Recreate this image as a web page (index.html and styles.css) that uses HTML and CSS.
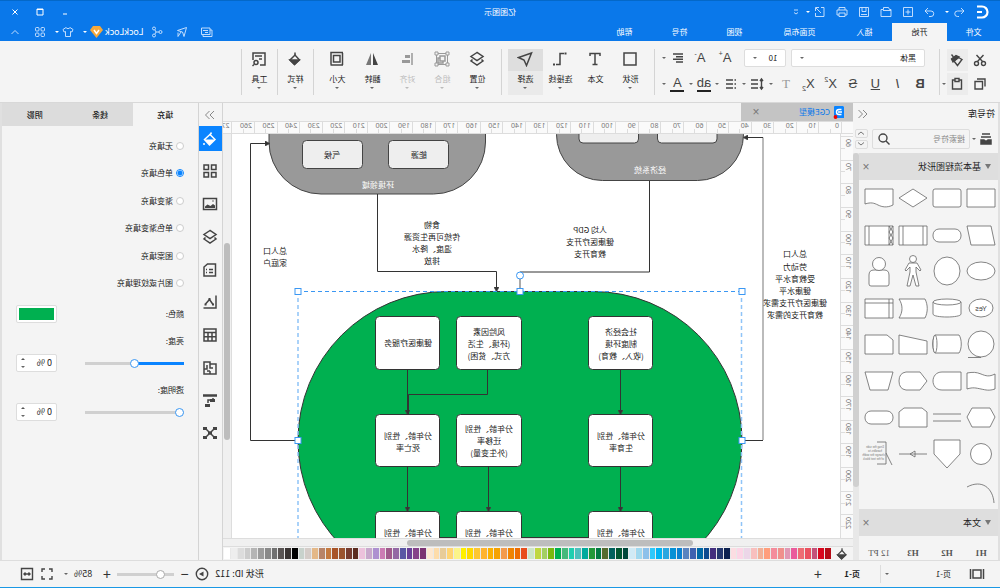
FILE: index.html
```html
<!DOCTYPE html>
<html lang="zh-CN">
<head>
<meta charset="utf-8">
<title>亿图图示</title>
<link rel="stylesheet" href="styles.css">
</head>
<body>
<div class="app">
<header class="header">
  <div class="titlebar">
    <div class="quick">
      <svg class="logo" viewBox="0 0 14 14"><path d="M12 1.500H7a5.500 5.500 0 0 0 0 11h5M7 7h5" fill="none" stroke="#fff" stroke-width="2.200"/></svg>
      <button aria-label="撤销"><svg class="q" viewBox="0 0 12 12"><path d="M4 2 1 5l3 3M1 5h6.500a2.500 2.500 0 0 1 0 5.500H6"/></svg></button><i class="car first"></i>
      <button aria-label="重做"><svg class="q" viewBox="0 0 12 12"><path d="M8 2l3 3-3 3M11 5H5a2.500 2.500 0 0 0 0 5.500h2"/></svg></button>
      <button aria-label="新建"><svg class="q" viewBox="0 0 12 12"><path d="M1.500 1.500h9v9h-9zM6 3.500v5M3.500 6h5"/></svg></button>
      <button aria-label="打开"><svg class="q" viewBox="0 0 12 12"><path d="M1 10.500v-7h1.500l1-2h5v2h2.500v7zM1 4.500h8"/></svg></button>
      <button aria-label="保存"><svg class="q" viewBox="0 0 12 12"><path d="M1.500 1.500h9v9h-9zM4 1.500v4h4v-4M3 8.500h6"/></svg></button>
      <button aria-label="打印"><svg class="q" viewBox="0 0 12 12"><path d="M3 4V1.500h6V4M3 9H1V4h10v5H9M3 7h6v3.500H3z"/></svg></button>
      <button aria-label="导出"><svg class="q" viewBox="0 0 12 12"><path d="M5 1.500H2v9h8.500V7M5 7l5-5M7 1.500h3.500V5"/></svg></button><i class="car"></i>
      <button aria-label="更多"><svg class="q" viewBox="0 0 12 12"><path d="M4 4h4M4 6.500l2 1.500 2-1.500"/></svg></button>
    </div>
    <h1 class="title">亿图图示</h1>
    <div class="winbtns">
      <button aria-label="最小化"><svg class="w" viewBox="0 0 8 8"><path d="M2 6h4"/></svg></button>
      <button aria-label="最大化"><svg class="w" viewBox="0 0 8 8"><path d="M1 1h6v6H1zM1 1.500h6"/></svg></button>
      <button aria-label="关闭"><svg class="w" viewBox="0 0 8 8"><path d="M1.500 1.500l5 5M6.500 1.500l-5 5"/></svg></button>
    </div>
  </div>
  <div class="menubar">
    <nav class="menus">
      <button>文件</button><button class="on">开始</button><button>插入</button><button class="wide">页面布局</button><button>视图</button><button>符号</button><button>帮助</button>
    </nav>
    <div class="account">
      <button aria-label="消息"><svg class="q" viewBox="0 0 12 12"><path d="M3 2h8.500v6.500H3zM3 4H1v6.500h9V9M5 4.500h5M5 6.500h3"/></svg></button>
      <button aria-label="发送"><svg class="q" viewBox="0 0 12 12"><path d="M1.500 1.500l9 3-5 1.500L4 10.500zM7 6l3 4.500V6.500"/></svg></button>
      <button aria-label="分享"><svg class="q" viewBox="0 0 12 12"><circle cx="2.500" cy="6" r="1.500"/><circle cx="9" cy="2.500" r="1.500"/><circle cx="9" cy="9.500" r="1.500"/><path d="M4 6h3l1-2M7 6l1 2"/></svg></button>
      <span class="user">LockLock</span>
      <svg class="gem" viewBox="0 0 13 12"><path d="M3 0h7l3 4-6.500 8L0 4z" fill="#f6a83a" stroke="none"/><path d="M4 4l2.500 3.500L9 4" fill="none" stroke="#fff" stroke-width="1.500"/></svg>
      <i class="car"></i>
      <button aria-label="皮肤"><svg class="q" viewBox="0 0 12 12"><path d="M4 1.500 1 3.500 2 6l1.500-.5v5h5v-5L10 6l1-2.500-3-2c-1 1.500-3 1.500-4 0z"/></svg></button><i class="car"></i>
      <button aria-label="应用"><svg class="q" viewBox="0 0 12 12"><rect x="1.500" y="1.500" width="3.500" height="3.500" rx="1"/><rect x="7" y="1.500" width="3.500" height="3.500" rx="1"/><rect x="1.500" y="7" width="3.500" height="3.500" rx="1"/><rect x="7" y="7" width="3.500" height="3.500" rx="1"/></svg></button>
      <button aria-label="收起"><svg class="q" viewBox="0 0 12 12"><path d="M2.500 8 6 4.500 9.500 8"/></svg></button>
    </div>
  </div>
</header>

<section class="ribbon">
  <div class="clip">
    <button aria-label="剪切"><svg class="t" viewBox="0 0 14 14"><circle cx="3.500" cy="10.500" r="2"/><circle cx="10.500" cy="10.500" r="2"/><path d="M4.500 8.500 10.500 2M9.500 8.500 3.500 2"/></svg></button>
    <button class="sh" aria-label="格式刷"><svg class="t" viewBox="0 0 14 14"><path d="M2 6.500 5.500 4.500 10 8l-3.500 4.500z"/><path d="M5 4l6 5 1.500-3L8 2.500z" fill="#444"/><path d="M10.500 4 12.500 1.500"/></svg></button><i></i>
    <button aria-label="复制"><svg class="t" viewBox="0 0 14 14"><path d="M4.500 4.500h7.500V12H4.500zM2 9.500V2h8"/></svg></button>
    <button class="sh" aria-label="粘贴"><svg class="t" viewBox="0 0 14 14"><path d="M2.500 3h9v9h-9z"/><path d="M5 1.500h4v3H5z" fill="#f4f4f4"/></svg></button><i class="car"></i>
  </div>
  <div class="font">
    <div class="fr">
      <label class="sel name"><select aria-label="字体"><option>黑体</option></select><i class="car"></i></label>
      <label class="sel size"><select aria-label="字号"><option>10</option></select><i class="car"></i></label>
      <button class="g">A<sup>+</sup></button><button class="g">A<sup>-</sup></button>
      <button aria-label="对齐"><svg class="t" viewBox="0 0 14 14"><path d="M2 3h10M2 5.700h7M2 8.300h10M2 11h7"/></svg></button><i class="car"></i>
    </div>
    <div class="fr two">
      <button class="g"><b>B</b></button><button class="g"><em>I</em></button><button class="g"><u>U</u></button><button class="g"><s>S</s></button>
      <button class="g">X<sup>2</sup></button><button class="g">X<sub>2</sub></button><button class="g dim"><span class="serif">T</span></button><i class="car"></i>
      <button aria-label="行距"><svg class="t" viewBox="0 0 14 14"><path d="M6 3h7M6 7h7M6 11h7M2.500 2v10M1 4l1.500-2L4 4M1 10l1.500 2L4 10"/></svg></button><i class="car"></i>
      <button aria-label="列表"><svg class="t" viewBox="0 0 14 14"><path d="M5 3h7M5 7h7M5 11h7M2 3h1.500M2 7h1.500M2 11h1.500"/></svg></button><i class="car"></i>
      <button class="g bar">ab</button><i class="car"></i>
      <button class="g bar">A</button><i class="car"></i>
    </div>
  </div>
  <div class="grp">
    <button><svg class="r" viewBox="0 0 16 16"><path d="M2 2h12v12H2z"/></svg><span>形状</span><i class="car"></i></button>
    <button><svg class="r" viewBox="0 0 16 16"><path d="M3 5V2.500h10V5M8 2.500v11M5.500 13.500h5"/></svg><span>文本</span></button>
    <button><svg class="r" viewBox="0 0 16 16"><path d="M4 2.500h4v11h4"/><path d="M1.500 1.500h2v2h-2zM13 12.500h2v2h-2z" fill="#444" stroke="none"/></svg><span>连接线</span><i class="car"></i></button>
    <button class="on"><svg class="r" viewBox="0 0 16 16"><path d="M1.500 2 14.500 6.500 9 9l-2.500 5.500z"/></svg><span>选择</span><i class="car"></i></button>
  </div>
  <div class="grp">
    <button><svg class="r" viewBox="0 0 16 16"><path d="M8 1.500l6 4-6 4-6-4zM3.500 8.500 2 10l6 4 6-4-1.500-1.500"/></svg><span>位置</span><i class="car"></i></button>
    <button class="dim"><svg class="r" viewBox="0 0 16 16"><path d="M2.500 2.500h11v11h-11z" stroke-width="1"/><path d="M5 5h5v5H5zM10 7h2v5H7v-2"/><path d="M1 1h3v3H1zM12 1h3v3h-3zM1 12h3v3H1zM12 12h3v3h-3z" fill="#f4f4f4" stroke-width="1"/></svg><span>组合</span><i class="car"></i></button>
    <button class="dim"><svg class="r" viewBox="0 0 16 16"><path d="M3 2v12"/><path d="M5 4h5v3H5zM5 9h8v3H5z" fill="#999" stroke="none"/></svg><span>对齐</span><i class="car"></i></button>
    <button><svg class="r" viewBox="0 0 16 16"><path d="M7 2v12H2z" fill="#444" stroke="none"/><path d="M9 2v12h5z" fill="#777" stroke="none"/></svg><span>翻转</span><i class="car"></i></button>
    <button><svg class="r" viewBox="0 0 16 16"><path d="M5 4.500h6.500V11H5zM2.500 2v12M2 14h12.500M2 1.500h12v12"/></svg><span>大小</span><i class="car"></i></button>
  </div>
  <div class="grp one"><button><svg class="r" viewBox="0 0 16 16"><path d="M3.500 9 8 4l5 5-4.500 4.500z"/><path d="M4 9h9l-4.500 4.500z" fill="#444"/><path d="M8 4V1.500"/></svg><span>样式</span><i class="car"></i></button></div>
  <div class="grp one"><button><svg class="r" viewBox="0 0 16 16"><path d="M7 14H2V2h12v7M5 5h7M5 8h3"/><circle cx="11" cy="11.500" r="2"/><path d="M13 13.500l1.500 1.500"/></svg><span>工具</span><i class="car"></i></button></div>
</section>

<main class="body">
  <aside class="library">
    <div class="libhead"><h2>符号库</h2><button aria-label="收起符号库"><svg class="t lite" viewBox="0 0 14 14"><path d="M7 3 3 7l4 4M11.500 3l-4 4 4 4"/></svg></button></div>
    <div class="libsearch">
      <svg class="r" viewBox="0 0 16 16"><path d="M3 9h3l1 1h2l1-1h3v4H3z" fill="#444"/><path d="M3 6h10M4 3h8"/></svg><i class="car"></i>
      <label class="sbox"><input type="text" placeholder="搜索符号" aria-label="搜索符号"><svg class="t" viewBox="0 0 14 14"><circle cx="8" cy="6" r="4"/><path d="M5 9l-3.500 3.500"/></svg></label>
      <span class="steps"><button aria-label="上一个"><svg viewBox="0 0 10 6"><path d="M2 4.500 5 2l3 2.500"/></svg></button><button aria-label="下一个"><svg viewBox="0 0 10 6"><path d="M2 1.500 5 4l3-2.500"/></svg></button></span>
    </div>
    <div class="libmain">
      <div class="liblist">
        <div class="sec"><i class="tri"></i><h3>基本流程图形状</h3><button class="x" aria-label="关闭">×</button></div>
        <div class="shapes">
          <svg viewBox="0 0 34 36"><path d="M3 9h28v18H3z"/></svg>
          <svg viewBox="0 0 34 36"><rect x="3" y="9" width="28" height="18" rx="2"/></svg>
          <svg viewBox="0 0 34 36"><path d="M17 9l14 9-14 9-14-9z"/></svg>
          <svg viewBox="0 0 34 36"><path d="M3 9h28v15c-6-2-9-1-13 1s-9 3-15 0z"/></svg>
          <svg viewBox="0 0 34 36"><path d="M7 9h24l-4 19H3z"/></svg>
          <svg viewBox="0 0 34 36"><rect x="3" y="12" width="28" height="13" rx="6"/></svg>
          <svg viewBox="0 0 34 36"><path d="M3 9h28v19H3zM7 9v19M27 9v19"/></svg>
          <svg viewBox="0 0 34 36"><path d="M3 9h28v19H3zM7 9v19M27 9v19M3 9l4 6-4 6 4 7M7 9l-4 6 4 6-4 7"/></svg>
          <svg viewBox="0 0 34 36"><ellipse cx="17" cy="18" rx="14" ry="9"/></svg>
          <svg viewBox="0 0 34 36"><ellipse cx="17" cy="18" rx="13" ry="14"/></svg>
          <svg viewBox="0 0 34 36"><circle cx="17" cy="6" r="3.500"/><path d="M13 10h8l4 7-1 1-4-4v5l3 14h-3l-3-11-3 11h-3l3-14v-5l-4 4-1-1z"/></svg>
          <svg viewBox="0 0 34 36"><path d="M7 31v-9q0-5 5-5h10q5 0 5 5v9q0 2-2 2H9q-2 0-2-2z"/><circle cx="17" cy="11" r="6.500"/></svg>
          <svg viewBox="0 0 34 36"><ellipse cx="17" cy="18" rx="12" ry="9"/><text x="17" y="21" text-anchor="middle">Yes</text></svg>
          <svg viewBox="0 0 34 36"><path d="M3 12v12c0 4 28 4 28 0V12"/><ellipse cx="17" cy="12" rx="14" ry="3"/></svg>
          <svg viewBox="0 0 34 36"><path d="M5 9h26c-4 6-4 13 0 19H5c-3-6-3-13 0-19z"/></svg>
          <svg viewBox="0 0 34 36"><path d="M3 9h28v19H3zM7 9v19M3 13h28"/></svg>
          <svg viewBox="0 0 34 36"><circle cx="17" cy="18" r="13"/><path d="M17 31.500h13"/></svg>
          <svg viewBox="0 0 34 36"><path d="M5 9h24c3 4 3 14 0 18H5c-3-4-3-14 0-18z"/><ellipse cx="29" cy="18" rx="2" ry="9"/></svg>
          <svg viewBox="0 0 34 36"><path d="M3 15l28-6v19H3z"/></svg>
          <svg viewBox="0 0 34 36"><path d="M9 9h22v19H3V14z"/></svg>
          <svg viewBox="0 0 34 36"><path d="M3 11c6 3 9 2 14 0s8-2 14-1v16c-6-2-9-1-14 0s-8 2-14 0z"/></svg>
          <svg viewBox="0 0 34 36"><path d="M3 9h19c12 0 12 18 0 18H3z"/></svg>
          <svg viewBox="0 0 34 36"><path d="M3 18l7-9h14q7 1 7 9t-7 9H10z"/></svg>
          <svg viewBox="0 0 34 36"><path d="M3 9h28l-5 18H8z"/></svg>
          <svg viewBox="0 0 34 36"><path d="M8 9h18l5 9-5 10H8l-5-10z"/></svg>
          <svg viewBox="0 0 34 36"><path d="M3 15h28M3 22h28"/></svg>
          <svg viewBox="0 0 34 36"><path d="M8 9h18l5 4v15H3V13z"/></svg>
          <svg viewBox="0 0 34 36"><rect x="3" y="12" width="28" height="13" rx="6"/></svg>
          <svg viewBox="0 0 34 36"><circle cx="17" cy="18" r="10.500"/></svg>
          <svg viewBox="0 0 34 36"><path d="M4 4h26v14L17 32 4 18z"/></svg>
          <svg viewBox="0 0 34 36"><path d="M3 18h28M15 15l5 3-5 3z"/></svg>
          <svg viewBox="0 0 34 36"><path d="M19 6h-9v22h9M10 17 4 29" fill="none"/><g class="tiny"><text x="12" y="12">Drag the side</text><text x="14" y="16">handles to</text><text x="11" y="20">change the width</text><text x="12" y="24">of the text block</text></g></svg>
          <svg viewBox="0 0 34 36"><path d="M4 31C5 16 16 7 31 15" fill="none"/></svg>
        </div>
        <div class="sec"><i class="tri"></i><h3>文本</h3><button class="x" aria-label="关闭">×</button></div>
        <div class="heads"><b>H1</b><b>H2</b><b>H3</b><span>12 PT</span></div>
      </div>
      <div class="vbar lib"><i></i></div>
    </div>
  </aside>

  <section class="doc">
    <div class="tabs"><div class="tab"><svg class="t" viewBox="0 0 14 14"><path d="M4 1h8q1 0 1 1v10q0 1-1 1H3V2z" fill="#0a84ff" stroke="none"/><path d="M5.500 4.500H8a2.500 2.500 0 0 1 0 5H5.500M5 7h4" stroke="#fff" fill="none"/><circle cx="11.500" cy="12" r="1.900" fill="#e00" stroke="none"/></svg><span>CGE模型</span><button class="x" aria-label="关闭文档">×</button></div></div>
    <div class="hruler" id="hruler"></div>
    <div class="work">
      <div class="vruler" id="vruler"></div>
      <div class="canvas">
        <svg class="diagram" width="609" height="404" viewBox="160 134 609 404">
          <defs><marker id="ar" viewBox="0 0 6 6" refX="5" refY="3" markerWidth="5" markerHeight="5" orient="auto"><path d="M0 0l6 3-6 3z" fill="#333"/></marker></defs>
          <g class="grey"><rect x="256.500" y="50" width="187" height="130.500" rx="46"/><rect x="514.500" y="50" width="216.500" height="144" rx="52"/></g>
          <g class="pale"><rect x="283" y="110" width="59.500" height="33" rx="4"/><rect x="361.500" y="110" width="59.500" height="33" rx="4"/><rect x="551.500" y="140.500" width="60" height="28" rx="4"/><rect x="637.500" y="140.500" width="60" height="28" rx="4"/></g>
          <rect x="258" y="291.500" width="444" height="298" rx="149" fill="#00b050" stroke="#333"/>
          <g class="wire">
            <path d="M350.500 181V272H480"/>
            <path d="M622.500 194v77.500h-119V291" marker-end="url(#ar)"/>
            <path d="M237 440V137.500" stroke="#bbb" stroke-width="2"/><path d="M258 440.500h-21"/><path d="M237 137.500h19" marker-end="url(#ar)"/>
            <path d="M702 440.500h47.500v-297H731" marker-end="url(#ar)"/>
            <path d="M379.500 370v44" marker-end="url(#ar)"/><path d="M379.500 467v44" marker-end="url(#ar)"/>
            <path d="M592.500 370v44" marker-end="url(#ar)"/><path d="M592.500 467v44" marker-end="url(#ar)"/>
            <path d="M511.500 467v44" marker-end="url(#ar)"/><path d="M512.500 370v24.500h79V414"/>
            <path d="M411 537.500h68M543 537.500h18"/>
          </g>
          <g class="white">
            <rect x="347.500" y="316.500" width="64" height="53" rx="4"/><rect x="478.500" y="316.500" width="65" height="53" rx="4"/><rect x="560.500" y="316.500" width="64" height="53" rx="4"/>
            <rect x="347.500" y="414.500" width="64" height="52" rx="4"/><rect x="478.500" y="414.500" width="65" height="52" rx="4"/><rect x="560.500" y="414.500" width="64" height="52" rx="4"/>
            <rect x="347.500" y="511.500" width="64" height="52" rx="4"/><rect x="478.500" y="511.500" width="65" height="52" rx="4"/><rect x="560.500" y="511.500" width="64" height="52" rx="4"/>
          </g>
          <g class="lbl">
            <text x="350" y="173" class="lt">经济系统</text><text x="622" y="188" class="lt">环境领域</text>
            <text x="581" y="158">能源</text><text x="668" y="158">气候</text>
            <text x="410" y="233">人均 GDP</text><text x="410" y="245">健康医疗开支</text><text x="410" y="257">教育开支</text>
            <text x="568" y="228">食物</text><text x="568" y="240">传统可再生资源</text><text x="568" y="252">温度、降水</text><text x="568" y="264">排放</text>
            <text x="725" y="254">总人口</text><text x="725" y="266">家庭户</text>
            <text x="205" y="257">总人口</text><text x="205" y="270">劳动力</text><text x="205" y="282">受教育水平</text><text x="205" y="294">健康水平</text><text x="205" y="306">健康医疗开支需求</text><text x="205" y="318">教育开支的需求</text>
            <text x="379" y="335">社会经济</text><text x="379" y="347">制度环境</text><text x="379" y="359">(收入、教育)</text>
            <text x="511" y="335">风险因素</text><text x="511" y="347">(环境、生活</text><text x="511" y="359">方式、贫困)</text>
            <text x="592" y="346">健康医疗服务</text>
            <text x="379" y="439">分年龄、性别</text><text x="379" y="451">生育率</text>
            <text x="511" y="432">分年龄、性别</text><text x="511" y="444">迁移率</text><text x="511" y="456">(外生变量)</text>
            <text x="592" y="439">分年龄、性别</text><text x="592" y="451">死亡率</text>
            <text x="379" y="536">分年龄、性别</text><text x="511" y="536">分年龄、性别</text><text x="592" y="536">分年龄、性别</text>
          </g>
          <path d="M480 279v9" stroke="#aaa" stroke-width="2"/>
          <path d="M258 291.500h444" class="dash"/><path d="M258.500 291v250M702 291v250" class="dash soft"/>
          <g class="hand"><circle cx="480" cy="275.500" r="3.500"/><rect x="255" y="288.500" width="6" height="6"/><rect x="477" y="288.500" width="6" height="6"/><rect x="699" y="288.500" width="6" height="6"/><rect x="255" y="437.500" width="6" height="6"/><rect x="699" y="437.500" width="6" height="6"/></g>
        </svg>
      </div>
      <div class="vbar page"><i></i></div>
    </div>
    <div class="hbar"><i></i></div>
    <div class="palrow"><svg class="t" viewBox="0 0 16 16"><path d="M3.500 9 8 4l5 5-4.500 4.500z"/><path d="M4 9h9l-4.500 4.500z" fill="#444"/><path d="M8 4V1.500"/></svg><div class="palette" id="palette"></div></div>
  </section>

  <nav class="rail">
    <button aria-label="展开"><svg class="t lite" viewBox="0 0 14 14"><path d="M3 3l4 4-4 4M7.500 3l4 4-4 4"/></svg></button>
    <div class="tools">
      <button class="on" aria-label="填充"><svg class="r" viewBox="0 0 16 16"><path d="M3 8.500 8 3.500l5.500 5L8.500 14z" stroke="#fff"/><path d="M3 8.500h10.500L8.500 14z" fill="#fff" stroke="none"/><path d="M8 4 6.500 1.500M14 12v2" stroke="#fff"/></svg></button>
      <button aria-label="主题"><svg class="r" viewBox="0 0 16 16"><path d="M2 2h4.500v4.500H2zM9.500 2H14v4.500H9.500zM2 9.500h4.500V14H2zM9.500 9.500H14V14H9.500z"/></svg></button>
      <button aria-label="图片"><svg class="r" viewBox="0 0 16 16"><path d="M1.500 2.500h13v11h-13z"/><path d="M3 12V9.500L5 8l2.500 2 3-1.500 2.500 2V12z" fill="#444" stroke="none"/><path d="M4.500 5h1"/></svg></button>
      <button aria-label="图层"><svg class="r" viewBox="0 0 16 16"><path d="M8 1.500l6 4-6 4-6-4zM3.500 8.500 2 10l6 4 6-4-1.500-1.500"/></svg></button>
      <button aria-label="页面"><svg class="r" viewBox="0 0 16 16"><path d="M2.500 2h8L14 5v9H2.500zM5 7.500h4M11 7.500h1M5 10.500h4M11 10.500h1"/></svg></button>
      <button aria-label="图表"><svg class="r" viewBox="0 0 16 16"><path d="M2 1.500V14h12.500M5 10.500l3.500-5 4 4.500"/><path d="M7.500 4h2v2.500h-2zM4 9.500h2v2H4zM11.500 9.500h2v2h-2z" fill="#444" stroke="none"/></svg></button>
      <button aria-label="表格"><svg class="r" viewBox="0 0 16 16"><path d="M2 2h12v12H2zM2 5.500h12M2 9.700h12M6 5.500V14M10 5.500V14"/></svg></button>
      <button aria-label="平面图"><svg class="r" viewBox="0 0 16 16"><path d="M2 14V4h6V2h6v12zM8 4v4H5M8 11v3M11 5v4h3M8 11h3"/></svg></button>
      <button aria-label="甘特图"><svg class="r" viewBox="0 0 16 16"><path d="M1 2.500h14" stroke-width="2.500"/><path d="M5 5v2h5v3"/><path d="M3 6h5v3H3zM8 11h5v3H8z" fill="#444" stroke="none"/></svg></button>
      <button aria-label="思维导图"><svg class="r" viewBox="0 0 16 16"><path d="M4 4l8 8M12 4l-8 8"/><path d="M1 2h4v3H1zM11 2h4v3h-4zM1 11h4v3H1zM11 11h4v3h-4zM6 6.500h4v3H6z" fill="#444" stroke="none"/></svg></button>
    </div>
  </nav>

  <aside class="props">
    <div class="ptabs"><button class="on">填充</button><button>线条</button><button>阴影</button></div>
    <div class="radios">
      <label><input type="radio" name="fill">无填充</label>
      <label><input type="radio" name="fill" checked>单色填充</label>
      <label><input type="radio" name="fill">渐变填充</label>
      <label><input type="radio" name="fill">单色渐变填充</label>
      <label><input type="radio" name="fill">图案填充</label>
      <label><input type="radio" name="fill">图片或纹理填充</label>
    </div>
    <div class="prow"><span>颜色:</span><button class="swatch" aria-label="颜色"><i></i></button></div>
    <label class="plabel" for="bri">亮度:</label>
    <div class="prow"><input type="range" id="bri" class="half" value="50"><span class="spin"><input type="text" value="0 %" aria-label="亮度值"><span><i class="up"></i><i class="car"></i></span></span></div>
    <label class="plabel" for="opa">透明度:</label>
    <div class="prow"><input type="range" id="opa" value="0"><span class="spin"><input type="text" value="0 %" aria-label="透明度值"><span><i class="up"></i><i class="car"></i></span></span></div>
  </aside>
</main>

<footer class="status">
  <div class="pages">
    <button aria-label="演示"><svg class="r" viewBox="0 0 16 16"><path d="M4 4h8v8H4zM1.500 3v10M14.500 3v10"/></svg></button>
    <label class="pg"><select aria-label="页面"><option>页-1</option></select><i class="car"></i></label>
    <b>页-1</b>
    <button class="pm">+</button>
  </div>
  <div class="view">
    <span class="num">形状 ID: 112</span>
    <button aria-label="播放"><svg class="t" viewBox="0 0 14 14"><circle cx="7" cy="7" r="5.700"/><path d="M5.500 4.500 10 7l-4.500 2.500z" fill="#444" stroke="none"/></svg></button>
    <button class="pm">−</button>
    <input type="range" value="20" class="zoom" aria-label="缩放">
    <button class="pm">+</button>
    <span class="num">85%</span><i class="car"></i>
    <button aria-label="全屏"><svg class="t" viewBox="0 0 14 14"><path d="M2 5V2h3M9 2h3v3M12 9v3H9M5 12H2V9"/></svg></button>
    <button aria-label="适应宽度"><svg class="t" viewBox="0 0 14 14"><path d="M1.500 1.500h11v11h-11zM4 7h6M5.500 5.500 4 7l1.500 1.500M8.500 5.500 10 7 8.500 8.500"/></svg></button>
  </div>
</footer>
</div>
<script src="script.js"></script>
</body>
</html>
```
FILE: styles.css
```css
* { box-sizing: border-box; }
body {
  margin: 0;
  font: 8px/12px "Noto Sans CJK SC", "Noto Sans", sans-serif;
  color: #222;
  background: #f4f4f4;
}
/* The whole window is shown mirrored, text included. */
.app { transform: scaleX(-1); display: flex; flex-direction: column; height: 100vh; overflow: hidden; background: #f4f4f4; }
button, input, select { font: inherit; color: inherit; background: none; border: 0; padding: 0; margin: 0; }
button { display: inline-flex; align-items: center; justify-content: center; flex: none; }
h1, h2, h3 { font: inherit; margin: 0; }
select { appearance: none; flex: 1; min-width: 0; outline: 0; }
svg { display: block; flex: none; fill: none; stroke: #444; }
.t { width: 14px; height: 14px; stroke-width: 1.4; }
.r { width: 16px; height: 16px; stroke-width: 1.5; }
.q { width: 12px; height: 12px; stroke: #d5e8ff; stroke-width: 0.9; }
.lite { stroke: #888; stroke-width: 1; }
.car { width: 0; height: 0; flex: none; border: 2px solid transparent; border-top: 2px solid #666; border-bottom: 0; }
.up { width: 0; height: 0; border: 2px solid transparent; border-bottom: 2px solid #555; border-top: 0; }
.x { font: 12px/12px "Liberation Sans", sans-serif; color: #777; width: 8px; }

.header { background: #0a78ea; border-top: 1px solid #0468c8; color: #fff; flex: none; }
.header .car { border-top-color: #fff; }
.titlebar { display: grid; grid-template-columns: 1fr auto 1fr; align-items: center; height: 22px; }
.quick { display: flex; align-items: center; padding-left: 11px; gap: 10px; }
.logo { width: 14px; height: 14px; }
.quick .car { margin: 0 -6px; }
.quick .first { margin-right: -1px; }
.winbtns { display: flex; justify-content: flex-end; gap: 17px; padding-right: 11px; }
.w { width: 8px; height: 8px; stroke: #fff; stroke-width: 1; }
.menubar { display: flex; justify-content: space-between; height: 18px; }
.menus { display: flex; }
.menus button { width: 55px; }
.menus button:first-child { width: 53px; }
.menus .wide { width: 75px; }
.menus .on { background: #f4f4f4; color: #222; }
.account { display: flex; align-items: center; gap: 7px; padding-right: 9px; }
.account button { margin-left: 6px; }
.account .car { margin: 0 -4px; }
.user { font: 9px/12px "Noto Sans", sans-serif; margin-right: -5px; }
.gem { width: 13px; height: 12px; }

.ribbon { display: flex; align-items: center; height: 62px; flex: none; border-bottom: 1px solid #d8d8d8; padding-left: 11px; }
.clip { display: grid; grid-template-columns: 18px 21px 8px; column-gap: 3px; row-gap: 2px; align-items: center; width: 50px; height: 46px; border-right: 1px solid #d4d4d4; }
.clip button { height: 22px; }
.clip .sh { background: #ececec; }
.clip .car { margin-left: -2px; }
.font { display: flex; flex-direction: column; gap: 8px; padding: 0 7px 0 8px; border-right: 1px solid #d4d4d4; height: 46px; width: 285px; }
.fr { display: flex; align-items: center; gap: 5px; height: 18px; padding-left: 6px; }
.fr .g { width: 20px; }
.two { gap: 0; justify-content: space-between; padding-left: 2px; }
.two .g { width: 18px; }
.two .bar { width: 14px; border-bottom: 2px solid #222; }
.sel { display: flex; align-items: center; height: 18px; background: #fff; border: 1px solid #ddd; border-radius: 2px; padding: 0 8px; }
.sel.name { width: 136px; }
.sel.size { width: 43px; margin-right: 4px; }
.g { font: 13px/14px "Liberation Sans", sans-serif; color: #444; height: 16px; }
.g sup, .g sub { font-size: 7px; line-height: 7px; }
.g sup { align-self: flex-start; }
.g sub { align-self: flex-end; }
.g .serif { font-family: "Liberation Serif", serif; }
.g.dim { color: #999; }
.grp { display: flex; height: 46px; border-right: 1px solid #d4d4d4; padding: 0 6px; }
.grp button { width: 35px; height: 46px; flex-direction: column; justify-content: flex-start; gap: 5px; padding-top: 2px; }
.grp button span { line-height: 14px; }
.grp button .car { margin-top: -4px; }
.grp .on { background: linear-gradient(#dedede 22px, #eaeaea 22px); }
.grp.one button { width: 23px; }
.grp .dim { color: #bbb; }
.grp .dim svg { stroke: #999; }
.grp .dim .car { border-top-color: #bbb; }

.body { display: flex; flex: 1; min-height: 0; }
.library { width: 147px; flex: none; display: flex; flex-direction: column; border-left: 2px solid #e0e0e0; min-height: 0; }
.libhead { display: flex; justify-content: space-between; align-items: center; height: 21px; padding: 0 3px; }
.libhead h2 { font-size: 9px; }
.libsearch { display: flex; align-items: center; height: 29px; gap: 2px; padding: 0 2px 0 4px; flex: none; }
.sbox { display: flex; align-items: center; flex: 1; min-width: 0; height: 20px; border: 1px solid #ddd; border-radius: 2px; padding: 0 4px; margin-right: 2px; }
.sbox input { flex: 1; min-width: 0; }
.sbox input::placeholder { color: #888; opacity: 1; }
.steps { display: flex; flex-direction: column; gap: 2px; }
.steps button { width: 13px; height: 9px; border: 1px solid #ddd; border-radius: 2px; }
.steps svg { width: 10px; height: 6px; stroke: #777; }
.libmain { display: flex; flex: 1; min-height: 0; }
.liblist { flex: 1; min-width: 0; overflow: hidden; }
.sec { display: flex; align-items: center; gap: 4px; height: 27px; background: #dedede; padding: 0 3px 0 7px; }
.sec h3 { flex: 1; font-size: 9px; }
.tri { border: 3px solid transparent; border-top: 5px solid #777; border-bottom: 0; }
.shapes { display: grid; grid-template-columns: repeat(4, 34px); grid-auto-rows: 1fr; height: 329px; }
.shapes svg { width: 34px; height: 36px; fill: #fff; stroke: #666; stroke-width: 0.8; }
.shapes text { font: 7px "Liberation Sans", sans-serif; fill: #444; stroke: none; }
.shapes .tiny text { font-size: 3px; fill: #777; }
.heads { display: grid; grid-template-columns: repeat(4, 34px); justify-items: center; padding-top: 12px; font: 9px/11px "Liberation Serif", serif; color: #555; }
.vbar i, .hbar i { display: block; background: #bdbdbd; border-radius: 3px; }
.vbar.lib { width: 6px; background: #e8e8e8; }
.vbar.lib i { height: 82%; background: #d0d0d0; }

.doc { flex: 1; min-width: 0; display: flex; flex-direction: column; }
.tabs { height: 18px; flex: none; display: flex; }
.tab { width: 112px; background: #c4c4c4; display: flex; align-items: center; gap: 3px; padding: 0 11px 0 6px; color: #0a78ea; }
.tab span { flex: 1; }
.hruler { display: flex; height: 13px; flex: none; overflow: hidden; padding-left: 11px; background: #fafafa; border: 1px solid #ddd; border-width: 1px 0; color: #777; font: 7px/8px "Noto Sans", sans-serif; }
.hruler span { flex: 0 0 3.65%; border-left: 1px solid #ddd; padding-left: 2px; background: linear-gradient(#ddd, #ddd) 50% 100% / 1px 4px no-repeat; }
.work { display: flex; flex: 1; min-height: 0; }
.vruler { width: 13px; flex: none; display: grid; grid-auto-rows: 1fr; padding-top: 2px; background: #fafafa; border-right: 1px solid #ddd; color: #777; font: 7px/8px "Noto Sans", sans-serif; }
.vruler span { border-top: 1px solid #ddd; background: linear-gradient(#ddd, #ddd) 100% 50% / 4px 1px no-repeat; padding: 2px 1px; overflow: hidden; }
.vruler b { font-weight: 400; display: block; writing-mode: vertical-rl; transform: rotate(180deg); }
.canvas { flex: 1; min-width: 0; background: #fff; overflow: hidden; }
.vbar.page { width: 9px; border-left: 1px solid #ddd; padding: 109px 1px 0; background: #f0f0f0; }
.vbar.page i { height: 197px; }
.hbar { height: 9px; flex: none; border: 1px solid #ddd; border-width: 1px 0; padding: 1px 184px 0 160px; background: #f0f0f0; }
.hbar i { width: 100%; height: 6px; }
.palrow { display: flex; align-items: center; height: 13px; flex: none; padding: 0 1px 0 4px; gap: 4px; overflow: hidden; }
.palette { display: flex; flex: 1; gap: 1px; height: 11px; background: #e8e8e8; }
.palette i { flex: 1; }

.grey rect { fill: #999; stroke: #444; }
.pale rect { fill: #eee; stroke: #444; }
.white rect { fill: #fff; stroke: #333; }
.wire { stroke: #333; }
.lbl { font: 8px "Noto Sans CJK SC", sans-serif; fill: #222; stroke: none; text-anchor: middle; }
.lbl .lt { fill: #fff; }
.dash { stroke: #3a97f3; stroke-dasharray: 4 3; }
.soft { stroke: #8fc4f8; stroke-width: 1.5; }
.hand { fill: #fff; stroke: #3a97f3; }

.rail { width: 25px; flex: none; border: 1px solid #d4d4d4; border-width: 0 1px; }
.rail > button { width: 100%; height: 23px; }
.tools { display: flex; flex-direction: column; justify-content: space-between; height: 320px; }
.tools button { width: 100%; height: 25px; }
.tools .on { background: #0a84ff; }

.props { width: 198px; flex: none; border-right: 2px solid #e0e0e0; }
.ptabs { display: flex; height: 23px; font-weight: 500; }
.ptabs button { flex: 1; background: #dcdcdc; }
.ptabs .on { background: none; }
.radios { display: grid; grid-auto-rows: 1fr; height: 165px; margin: 6px 0; padding-left: 14px; }
.radios label { display: flex; align-items: center; gap: 3px; }
input[type="radio"] { appearance: none; width: 8px; height: 8px; border: 1px solid #ccc; border-radius: 50%; background: #fff; }
input[type="radio"]:checked { border-color: #0a84ff; background: radial-gradient(#0a84ff 2px, #fff 3px); }
.prow { display: flex; align-items: center; justify-content: space-between; height: 22px; padding: 0 14px; }
.plabel { display: block; height: 16px; margin: 8px 0 3px 14px; line-height: 16px; }
.swatch { width: 41px; height: 18px; background: #fff; border: 1px solid #ddd; border-radius: 2px; padding: 2px; }
.swatch i { width: 100%; height: 100%; background: #00b050; }
.spin { display: flex; align-items: center; width: 41px; height: 18px; background: #fff; border: 1px solid #ddd; border-radius: 2px; padding: 0 4px; }
.spin input { flex: 1; min-width: 0; font-size: 9px; }
.spin span { display: flex; flex-direction: column; gap: 6px; }
input[type="range"] { appearance: none; width: 99px; height: 10px; background: linear-gradient(#d0d0d0, #d0d0d0) 50% 50% / 100% 3px no-repeat; }
input[type="range"].half { background-image: linear-gradient(90deg, #0a84ff 50%, #d0d0d0 50%); }
input[type="range"]::-webkit-slider-thumb { appearance: none; width: 9px; height: 9px; border: 1px solid #3a97f3; border-radius: 50%; background: #fff; }
input[type="range"].zoom { width: 57px; }
input[type="range"].zoom::-webkit-slider-thumb { border-color: #aaa; }

.status { display: flex; justify-content: space-between; align-items: center; height: 28px; flex: none; border-top: 1px solid #ddd; border-bottom: 1px solid #1a98e4; padding: 0 20px 0 15px; }
.pages, .view { display: flex; align-items: center; }
.pages { gap: 18px; }
.pg { display: flex; align-items: center; width: 71px; height: 18px; border-right: 1px solid #ddd; padding-right: 4px; }
.pages .pm { margin-left: 4px; }
.pages b { padding-left: 2px; }
.pm { font: 14px/14px "Liberation Sans", sans-serif; color: #333; width: 9px; }
.view { gap: 6px; }
.num { font-size: 9px; }
.view .num + .car { margin-right: 4px; }
.view .zoom + .pm { margin-right: 4px; }
```
FILE: script.js
```js
const fill = (id, html) => { document.getElementById(id).innerHTML = html; };

fill('hruler', Array.from({ length: 28 }, (_, i) => `<span>${i * 10}</span>`).join(''));
fill('vruler', Array.from({ length: 17 }, (_, i) => `<span><b>${60 + i * 10}</b></span>`).join(''));

const colors = ('b50a16 d9061d c4517a ea5160 ee6c74 ea5c9c e198b4 f0908c f48c9c ff9e7c f2b097 f8bfbe ecd6e8 fcd5e6 fcdde2 ' +
  '0d2150 25386f 442f7e 0d4a8f 0068a6 3f62b0 5a84c0 0a80d0 0590d6 2ba6e0 02b2f2 2ec8fb 8cc0ea a0d8ef d0eaf6 ' +
  '00473a 005530 00605c 556b2f 007a42 219838 00a99d 4cc0bc 1fcfb0 45b97c 00b050 7ab80e a3cf62 bfd740 cce6c8 ' +
  'e84e1c ee6c00 f08300 f39a4c f5a200 fbb000 ffb32e fdc732 ffd900 fff000 fbf48a ffd573 e8cc98 fddcaa fde8d0 ' +
  '7b3272 85418a 6a3f98 5a57a4 9468a4 a05a8c cc7cb4 ad90d0 c8a8cc ecc2dc 5c2c20 763c30 9a5430 a85428 c47a40 ' +
  'b88468 e4b888 d4ccc8 c8d2cc 000000 3a3433 5a5554 717171 898989 9c9c9c b5b5b5 cccccc dcdcdc eeeeee ffffff').split(' ');
fill('palette', colors.map(c => `<i style="background:#${c}"></i>`).join(''));
```
